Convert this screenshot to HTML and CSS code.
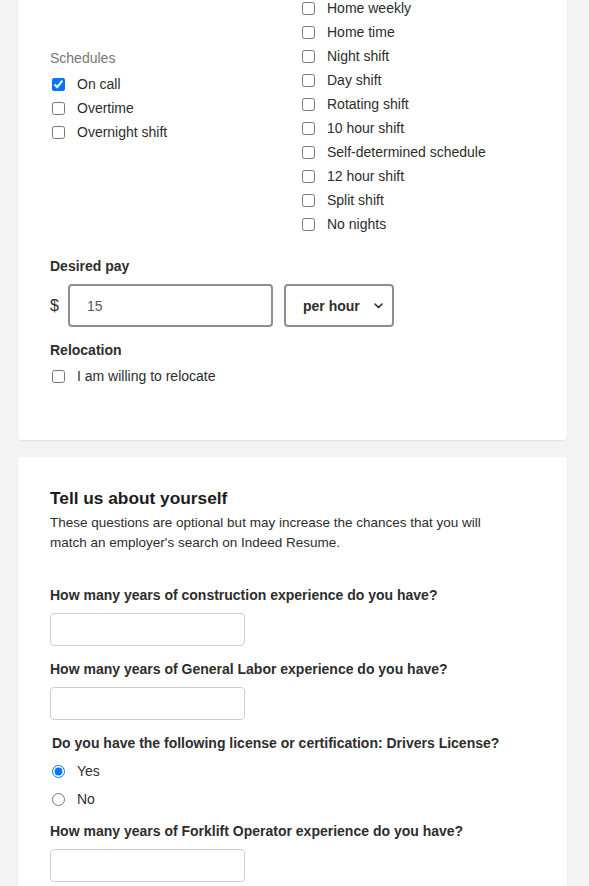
FILE: index.html
```html
<!DOCTYPE html>
<html lang="en">
<head>
<meta charset="utf-8">
<title>Preferences</title>
<link rel="stylesheet" href="styles.css">
</head>
<body>
<main class="page">
  <section class="card card-prefs">
    <div class="options-grid">
      <div class="col col-left">
        <div class="group-title">Schedules</div>
        <label class="check-row"><input type="checkbox" checked><span>On call</span></label>
        <label class="check-row"><input type="checkbox"><span>Overtime</span></label>
        <label class="check-row"><input type="checkbox"><span>Overnight shift</span></label>
      </div>
      <div class="col col-right">
        <label class="check-row"><input type="checkbox"><span>Home weekly</span></label>
        <label class="check-row"><input type="checkbox"><span>Home time</span></label>
        <label class="check-row"><input type="checkbox"><span>Night shift</span></label>
        <label class="check-row"><input type="checkbox"><span>Day shift</span></label>
        <label class="check-row"><input type="checkbox"><span>Rotating shift</span></label>
        <label class="check-row"><input type="checkbox"><span>10 hour shift</span></label>
        <label class="check-row"><input type="checkbox"><span>Self-determined schedule</span></label>
        <label class="check-row"><input type="checkbox"><span>12 hour shift</span></label>
        <label class="check-row"><input type="checkbox"><span>Split shift</span></label>
        <label class="check-row"><input type="checkbox"><span>No nights</span></label>
      </div>
    </div>

    <div class="field field-pay">
      <div class="field-label">Desired pay</div>
      <div class="pay-row">
        <span class="currency">$</span>
        <input class="pay-input" type="text" value="15">
        <div class="select-wrap">
          <select class="pay-select">
            <option>per hour</option>
            <option>per day</option>
            <option>per week</option>
            <option>per month</option>
            <option>per year</option>
          </select>
          <svg class="chevron" width="9" height="6" viewBox="0 0 9 6" aria-hidden="true">
            <path d="M1 1 L4.5 4.5 L8 1" fill="none" stroke="#2d2d2d" stroke-width="1.6" stroke-linecap="round" stroke-linejoin="round"/>
          </svg>
        </div>
      </div>
    </div>

    <div class="field field-relocation">
      <div class="field-label">Relocation</div>
      <label class="check-row"><input type="checkbox"><span>I am willing to relocate</span></label>
    </div>
  </section>

  <section class="card card-about">
    <h2 class="about-title">Tell us about yourself</h2>
    <p class="about-desc">These questions are optional but may increase the chances that you will match an employer's search on Indeed Resume.</p>

    <div class="question q-first">
      <label class="q-label">How many years of construction experience do you have?</label>
      <input class="q-input" type="text">
    </div>

    <div class="question">
      <label class="q-label">How many years of General Labor experience do you have?</label>
      <input class="q-input" type="text">
    </div>

    <fieldset class="question q-radio">
      <legend class="q-legend">Do you have the following license or certification: Drivers License?</legend>
      <label class="radio-row"><input type="radio" name="license" checked><span>Yes</span></label>
      <label class="radio-row"><input type="radio" name="license"><span>No</span></label>
    </fieldset>

    <div class="question q-after-radio">
      <label class="q-label">How many years of Forklift Operator experience do you have?</label>
      <input class="q-input" type="text">
    </div>
  </section>
</main>
</body>
</html>
```

FILE: styles.css
```css
* {
  box-sizing: border-box;
}

html,
body {
  margin: 0;
  padding: 0;
}

body {
  background: #f3f3f3;
  font-family: "Liberation Sans", Arial, sans-serif;
  color: #2d2d2d;
  font-size: 14px;
}

.page {
  display: flex;
  flex-direction: column;
  gap: 17px;
  margin-top: -4px;
  padding: 0 22px 0 18px;
}

.card {
  background: #fff;
  border-radius: 3px;
  box-shadow: 0 1px 2px rgba(0, 0, 0, 0.07), 0 0 1px rgba(0, 0, 0, 0.06);
  padding: 0 32px 52px;
}

/* ---------- options grid ---------- */
.options-grid {
  display: grid;
  grid-template-columns: 250px 1fr;
}

.col {
  display: flex;
  flex-direction: column;
}

.col-left {
  padding-top: 52px;
}

.group-title {
  color: #767676;
  font-size: 14px;
  line-height: 20px;
  margin-bottom: 4px;
}

.check-row,
.radio-row {
  display: flex;
  align-items: center;
  height: 24px;
  font-size: 14px;
  color: #2d2d2d;
  cursor: pointer;
}

.check-row input,
.radio-row input {
  width: 13px;
  height: 13px;
  margin: 0 12px 0 2px;
  flex: none;
}

/* ---------- fields ---------- */
.field-label {
  font-weight: bold;
  font-size: 14px;
  line-height: 20px;
}

.field-pay {
  margin-top: 20px;
}

.pay-row {
  display: flex;
  align-items: center;
  margin-top: 8px;
}

.currency {
  width: 18px;
  font-size: 16px;
  color: #2d2d2d;
}

.pay-input {
  width: 205px;
  height: 43px;
  border: 2px solid #8f8f8f;
  border-radius: 4px;
  padding: 0 0 0 17px;
  font-family: inherit;
  font-size: 14px;
  color: #5a5a5a;
  outline: none;
}

.select-wrap {
  position: relative;
  margin-left: 11px;
}

.pay-select {
  appearance: none;
  -webkit-appearance: none;
  width: 110px;
  height: 43px;
  border: 2px solid #8f8f8f;
  border-radius: 4px;
  padding: 0 0 0 17px;
  background: #fff;
  font-family: inherit;
  font-size: 14px;
  font-weight: bold;
  color: #2d2d2d;
}

.chevron {
  position: absolute;
  top: 19px;
  left: 90px;
  pointer-events: none;
}

.field-relocation {
  margin-top: 13px;
}

.field-relocation .check-row {
  margin-top: 4px;
}

/* ---------- about card ---------- */
.card-about {
  padding-top: 32px;
}

.about-title {
  margin: 0;
  font-size: 17.3px;
  line-height: 18px;
  font-weight: bold;
  color: #1c1c1c;
}

.about-desc {
  margin: 6px 0 0;
  font-size: 13.5px;
  line-height: 20px;
  color: #2d2d2d;
  max-width: 460px;
}

.question {
  display: flex;
  flex-direction: column;
  align-items: flex-start;
  margin-top: 13px;
}

.q-first {
  margin-top: 32px;
}

.q-label,
.q-legend {
  font-size: 14px;
  font-weight: bold;
  line-height: 20px;
  color: #2d2d2d;
}

.q-input {
  width: 195px;
  height: 33px;
  margin-top: 8px;
  border: 1px solid #cdcdcd;
  border-radius: 4px;
  font-family: inherit;
  font-size: 14px;
  padding: 0 10px;
  outline: none;
}

.q-radio {
  border: none;
  margin: 13px 0 0;
  padding: 0;
  min-width: 0;
}

.q-legend {
  padding: 0 0 0 2px;
  margin-bottom: 4px;
}

.radio-row {
  height: 28px;
}

.q-after-radio {
  margin-top: 8px;
}
```
